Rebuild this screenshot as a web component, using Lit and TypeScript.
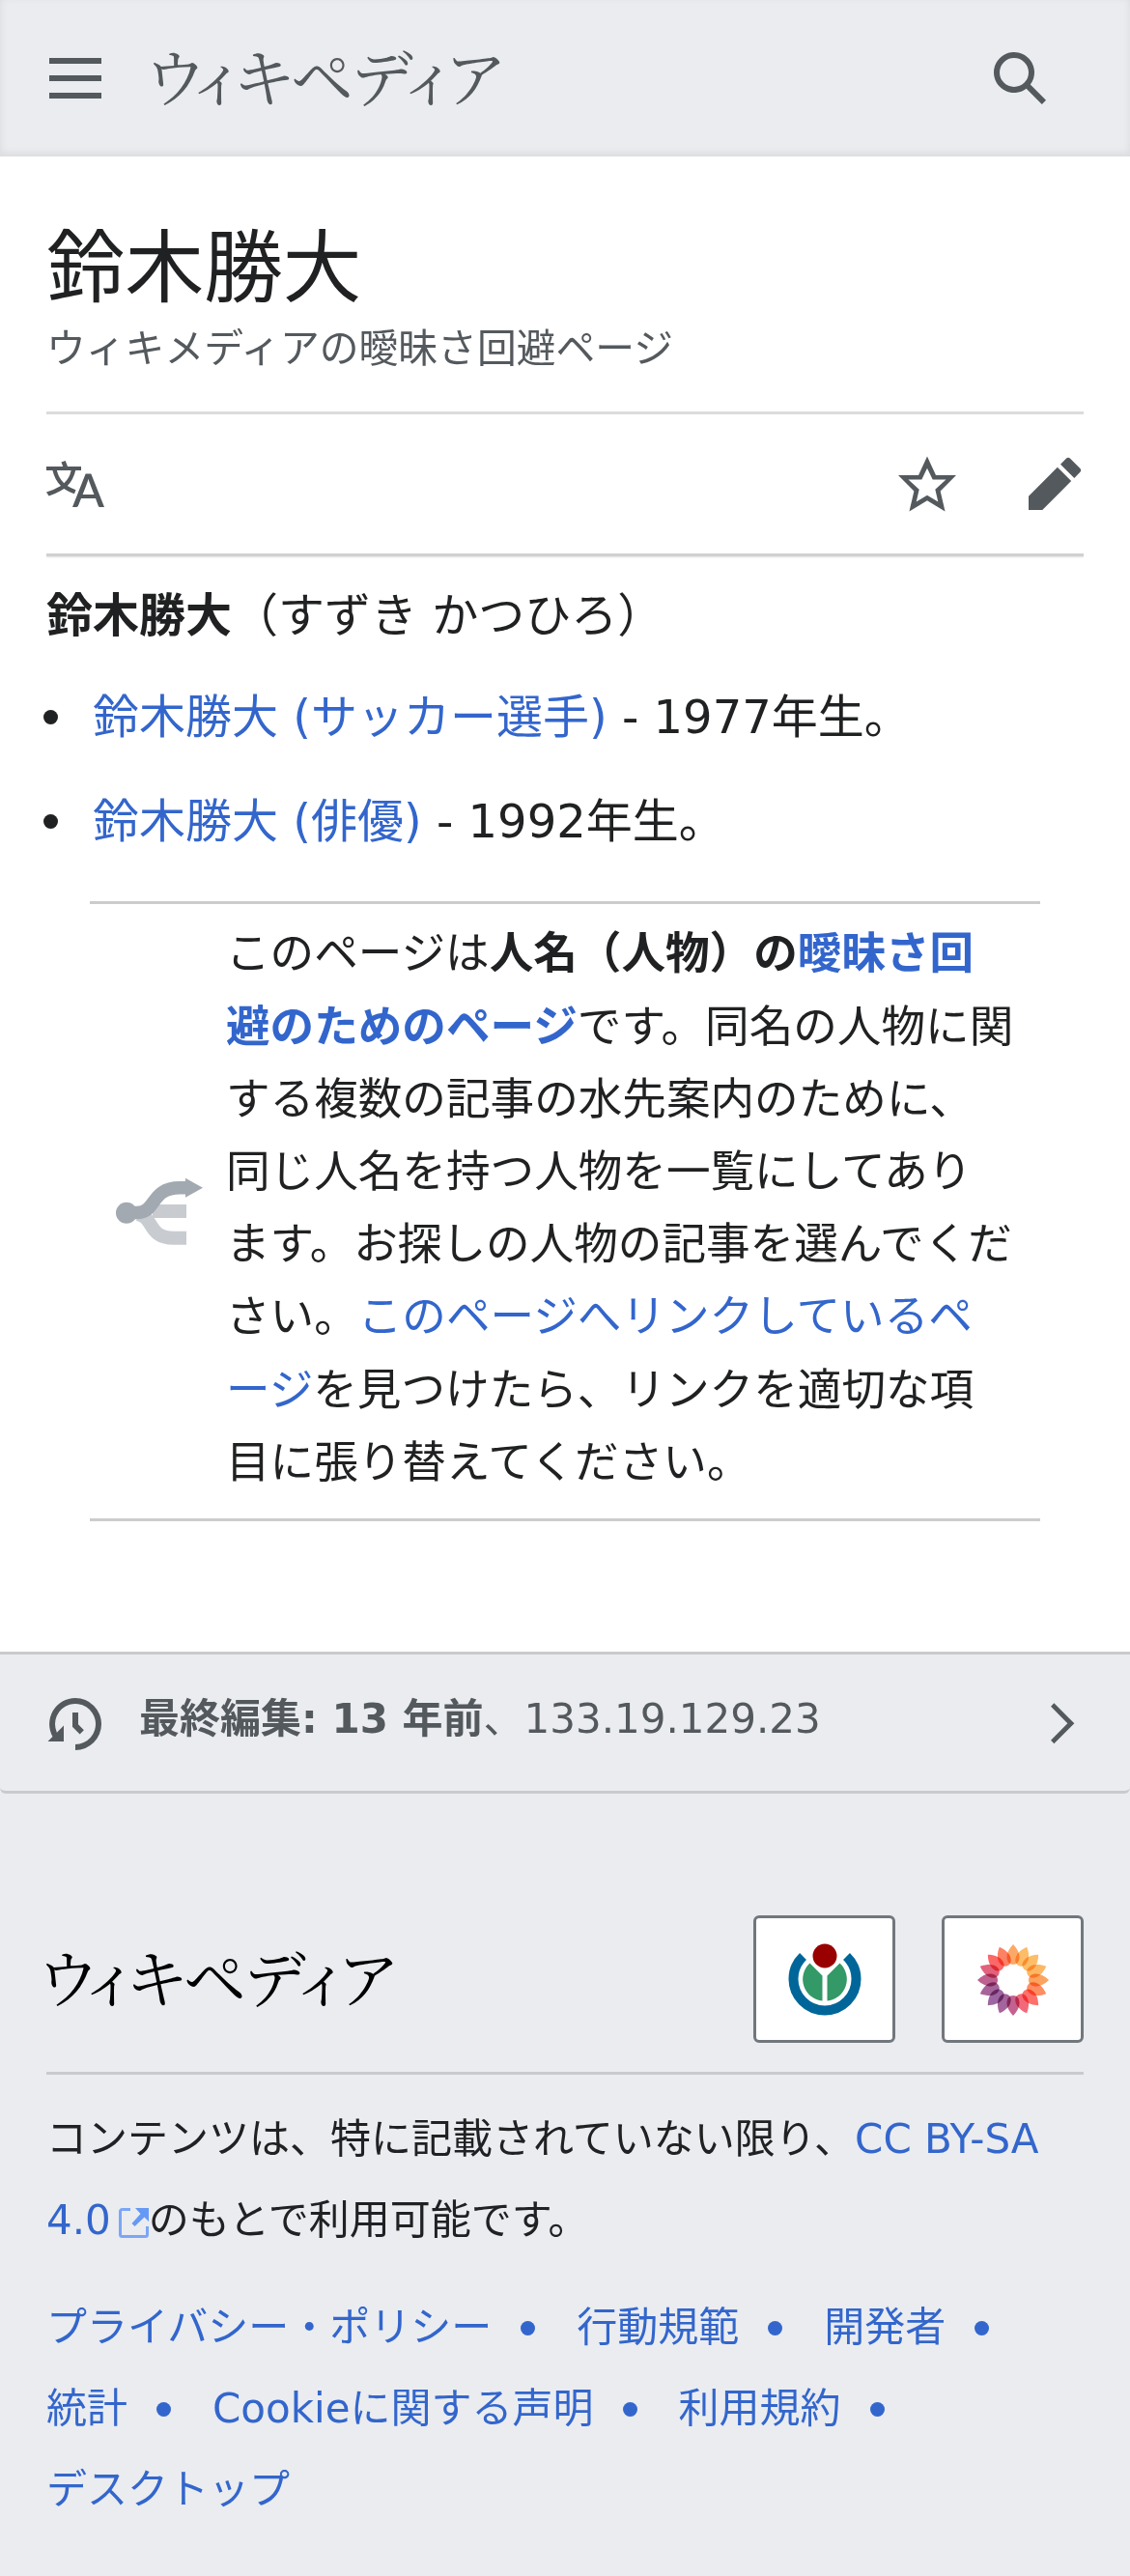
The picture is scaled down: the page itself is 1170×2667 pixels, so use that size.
import { LitElement, html, svg, css } from 'lit';
import { customElement } from 'lit/decorators.js';

interface FooterLink {
  label: string;
  href: string;
}

// One petal colour per 22.5 degrees, clockwise from twelve o'clock
const PETALS = [
  '#fc9a4c', '#fdb04c', '#fcb34f', '#fcaa4a', '#fc9344', '#fd7a45', '#fb5850', '#f05062',
  '#b8477c', '#96498c', '#8c4a90', '#96498a', '#b1457c', '#dc4766', '#f94e4c', '#fb6c4b'
];

@customElement('wiki-wordmark')
export class WikiWordmark extends LitElement {
  static styles = css`
    :host {
      display: block;
      width: 360px;
      height: 60px;
    }

    svg {
      display: block;
      overflow: visible;
    }

    text {
      font-family: "Noto Serif CJK JP", "Noto Sans CJK JP", serif;
      font-size: 65px;
      font-weight: 400;
      fill: currentColor;
    }
  `;

  render() {
    return html`
      <svg width="360" height="60" viewBox="0 0 360 60" role="img">
        <text x="-10 33 82 142 204 252 301" y="54">ウィキペディア</text>
      </svg>
    `;
  }
}

@customElement('app-root')
export class AppRoot extends LitElement {
  private links: FooterLink[] = [
    { label: 'プライバシー・ポリシー', href: '#privacy' },
    { label: '行動規範', href: '#conduct' },
    { label: '開発者', href: '#developers' },
    { label: '統計', href: '#stats' },
    { label: 'Cookieに関する声明', href: '#cookies' },
    { label: '利用規約', href: '#terms' },
    { label: 'デスクトップ', href: '#desktop' }
  ];

  static styles = css`
    :host {
      display: block;
      min-height: 2667px;
      background: #eaecf0;
      color: #202122;
      font-family: "DejaVu Sans", "Noto Sans CJK JP", sans-serif;
      font-size: 48px;
      line-height: 1.65;
    }

    * {
      box-sizing: border-box;
    }

    a {
      color: #3366cc;
      text-decoration: none;
    }

    h1, p, ul {
      margin: 0;
      padding: 0;
      font-weight: normal;
    }

    ul {
      list-style: none;
    }

    .icon {
      display: block;
      width: 60px;
      height: 60px;
      fill: #54595d;
    }

    .header {
      display: flex;
      align-items: center;
      height: 162px;
      padding: 0 84px 0 48px;
      box-shadow: inset 0 -3px 9px rgba(0, 0, 0, 0.08);
    }

    .header wiki-wordmark {
      margin: 0 auto 0 51px;
      color: #54595d;
    }

    .content {
      height: 1548px;
      padding: 63px 48px 0;
      background: #ffffff;
    }

    .title {
      font-size: 81.6px;
      line-height: 106px;
    }

    .tagline {
      font-size: 40.8px;
      line-height: 60px;
      color: #54595d;
    }

    .actions {
      display: flex;
      align-items: center;
      gap: 72px;
      height: 147px;
      margin-top: 35px;
      border-top: 3px solid #dadcde;
    }

    .divider {
      height: 3px;
      background: #d0d1d2;
      box-shadow: 0 1px 2px rgba(0, 0, 0, 0.12);
    }

    .language {
      margin-right: auto;
    }

    .lead {
      margin-top: 22px;
    }

    .entries {
      margin-top: 26px;
    }

    .entries li {
      display: flex;
      align-items: center;
      margin-bottom: 28.8px;
    }

    .entries li::before {
      content: "";
      width: 15px;
      height: 15px;
      margin: 0 36px 0 -3px;
      border-radius: 50%;
      background: #202122;
    }

    .disambig {
      display: flex;
      align-items: center;
      gap: 24px;
      margin: 43px 45px 0;
      padding: 14px 27px 20px;
      border: solid #cccccc;
      border-width: 3px 0;
      font-size: 45.6px;
    }

    .disambig svg {
      flex: none;
      margin-top: 8px;
      overflow: visible;
    }

    .last-modified {
      display: flex;
      align-items: center;
      height: 147px;
      padding: 2px 48px 0;
      border: solid #c8cacc;
      border-width: 3px 0;
      border-radius: 0 0 6px 6px;
      font-size: 42px;
      color: #54595d;
    }

    .last-modified p {
      margin: -10px auto 0 36px;
    }

    .chevron {
      width: 46.7px;
      height: 46.7px;
    }

    .footer {
      padding: 126px 48px 0;
      font-size: 42px;
      line-height: 84px;
    }

    .brands {
      display: flex;
      align-items: center;
      gap: 48px;
      height: 165px;
      padding-bottom: 30px;
      border-bottom: 3px solid #c8cacc;
    }

    .brands wiki-wordmark {
      margin-right: auto;
      color: #000000;
    }

    .badge {
      display: flex;
      align-items: center;
      justify-content: center;
      width: 147px;
      height: 132px;
      padding-top: 2px;
      border: 3px solid #72777d;
      border-radius: 6px;
      background: #ffffff;
    }

    /* Petals overlap near the centre, multiply darkens the shared area */
    .petal {
      fill-opacity: 0.85;
      mix-blend-mode: multiply;
    }

    .license {
      margin-top: 25px;
    }

    .external {
      width: 31px;
      height: 31px;
      margin: 0 0 0 8px;
      vertical-align: -4px;
    }

    .links {
      display: flex;
      flex-wrap: wrap;
      margin-top: 27px;
    }

    .links li {
      display: flex;
      align-items: center;
    }

    .links li:not(:last-child)::after {
      content: "";
      width: 15px;
      height: 15px;
      margin: 0 43px 0 30px;
      border-radius: 50%;
      background: #3366cc;
    }
  `;

  render() {
    return html`
      <header class="header">
        <svg class="icon" viewBox="0 0 20 20"><path d="M1 3v2h18V3zm0 8h18V9H1zm0 6h18v-2H1z"/></svg>
        <wiki-wordmark></wiki-wordmark>
        <svg class="icon" viewBox="0 0 20 20"><path fill-rule="evenodd" d="M12.2 13.6a7 7 0 1 1 1.4-1.4l5.4 5.4-1.4 1.4zM3 8a5 5 0 1 0 10 0A5 5 0 0 0 3 8"/></svg>
      </header>

      <main class="content">
        <h1 class="title">鈴木勝大</h1>
        <p class="tagline">ウィキメディアの曖昧さ回避ページ</p>

        <nav class="actions">
          <svg class="icon language" viewBox="0 0 20 20"><path d="M20 18h-1.44a.6.6 0 0 1-.4-.12.8.8 0 0 1-.23-.31L17 15h-5l-1 2.54a.8.8 0 0 1-.22.3.6.6 0 0 1-.4.14H9l4.55-11.47h1.89zm-3.53-4.31L14.89 9.5a12 12 0 0 1-.39-1.24q-.09.37-.19.69l-.19.56-1.58 4.19zm-6.3-1.58a13.4 13.4 0 0 1-2.91-1.41 11.46 11.46 0 0 0 2.81-5.37H12V4H7.31a4 4 0 0 0-.2-.56C6.87 2.79 6.6 2 6.6 2l-1.47.5s.4.89.6 1.5H0v1.33h2.15A11.23 11.23 0 0 0 5 10.7a17.2 17.2 0 0 1-5 2.1q.56.82.87 1.38a23.3 23.3 0 0 0 5.22-2.51 15.6 15.6 0 0 0 3.56 1.77zM3.63 5.33h4.91a8.1 8.1 0 0 1-2.45 4.45 9.1 9.1 0 0 1-2.46-4.45"/></svg>
          <svg class="icon" viewBox="0 0 20 20"><path d="M20 7h-7L10 .5 7 7H0l5.46 5.47-1.64 7 6.18-3.7 6.18 3.73-1.63-7zm-10 6.9-3.76 2.27 1-4.28L3.5 8.5h4.61L10 4.6l1.9 3.9h4.6l-3.73 3.4 1 4.28z"/></svg>
          <svg class="icon" viewBox="0 0 20 20"><path d="m16.77 8 1.94-2a1 1 0 0 0 0-1.41l-3.34-3.3a1 1 0 0 0-1.41 0L12 3.23zM1 14.25V19h4.75l9.96-9.96-4.75-4.75z"/></svg>
        </nav>
        <div class="divider"></div>

        <p class="lead"><b>鈴木勝大</b>（すずき かつひろ）</p>
        <ul class="entries">
          <li><span><a href="#footballer">鈴木勝大 (サッカー選手)</a> - 1977年生。</span></li>
          <li><span><a href="#actor">鈴木勝大 (俳優)</a> - 1992年生。</span></li>
        </ul>

        <div class="disambig">
          <svg width="90" height="70" viewBox="0 0 90 70">
            <path d="M22 37C40 39 32 61.700 60 61.700H73M38 34H73" fill="none" stroke="#c8ccd1" stroke-width="14"/>
            <path d="M11 35.500H22C42 35.500 36 9.700 66 9.700H74" fill="none" stroke="#a2a9b1" stroke-width="13.500"/>
            <path d="M72 -0.300 90 9.700 72 19.700z" fill="#a2a9b1"/>
            <circle cx="11" cy="35.700" r="11" fill="#a2a9b1"/>
          </svg>
          <p>このページは<b>人名（人物）の<a href="#disambig">曖昧さ回避のためのページ</a></b>です。同名の人物に関する複数の記事の水先案内のために、同じ人名を持つ人物を一覧にしてあります。お探しの人物の記事を選んでください。<a href="#backlinks">このページへリンクしているページ</a>を見つけたら、リンクを適切な項目に張り替えてください。</p>
        </div>
      </main>

      <div class="last-modified">
        <svg class="icon" viewBox="0 0 20 20"><path d="M9 6v5h.06l2.48 2.47 1.41-1.41L11 10.11V6z"/><path d="M10 1a9 9 0 0 0-7.85 13.35L.5 16H6v-5.5l-2.38 2.38A7 7 0 1 1 10 17v2a9 9 0 0 0 0-18"/></svg>
        <p><b>最終編集: 13 年前</b>、133.19.129.23</p>
        <svg class="icon chevron" viewBox="0 0 20 20"><path d="M7 1 5.6 2.5 13 10l-7.4 7.5L7 19l9-9z"/></svg>
      </div>

      <footer class="footer">
        <div class="brands">
          <wiki-wordmark></wiki-wordmark>
          <span class="badge">${this.renderWikimedia()}</span>
          <span class="badge">${this.renderMediaWiki()}</span>
        </div>
        <p class="license">
          コンテンツは、特に記載されていない限り、<a href="#license">CC BY-SA 4.0<svg class="external" viewBox="0 0 31 31"><path d="M12 1.500H3.500a2 2 0 0 0-2 2v24a2 2 0 0 0 2 2h24a2 2 0 0 0 2-2V19" fill="none" stroke="#7ba6f7" stroke-width="3"/><path d="M17 0h14v14l-4.500-4.500L16.500 19 13.500 16 22.500 6z" fill="#6699f5"/></svg></a>のもとで利用可能です。
        </p>
        <ul class="links">
          ${this.links.map((link) => html`<li><a href=${link.href}>${link.label}</a></li>`)}
        </ul>
      </footer>
    `;
  }

  private renderWikimedia() {
    return html`
      <svg width="76" height="76" viewBox="0 0 76 76">
        <path d="M15.500 13.500A32.500 32.500 0 1 0 60.500 13.500" fill="none" stroke="#006699" stroke-width="10"/>
        <path d="M22.500 20.500A22.500 22.500 0 0 0 35.500 59.500V33.500zM53.500 20.500A22.500 22.500 0 0 1 40.500 59.500V33.500z" fill="#339966"/>
        <circle cx="38" cy="13" r="12.500" fill="#990000"/>
      </svg>
    `;
  }

  private renderMediaWiki() {
    return html`
      <svg width="74" height="74" viewBox="-37 -37 74 74">
        ${PETALS.map((color, i) => svg`
          <path
            class="petal"
            d="M0 -37C4 -33 6.500 -28 6.500 -24C6.500 -19 4 -16 0 -16C-4 -16 -6.500 -19 -6.500 -24C-6.500 -28 -4 -33 0 -37z"
            fill=${color}
            transform=${`rotate(${i * 22.5})`}
          />
        `)}
      </svg>
    `;
  }
}

declare global {
  interface HTMLElementTagNameMap {
    'app-root': AppRoot;
    'wiki-wordmark': WikiWordmark;
  }
}
